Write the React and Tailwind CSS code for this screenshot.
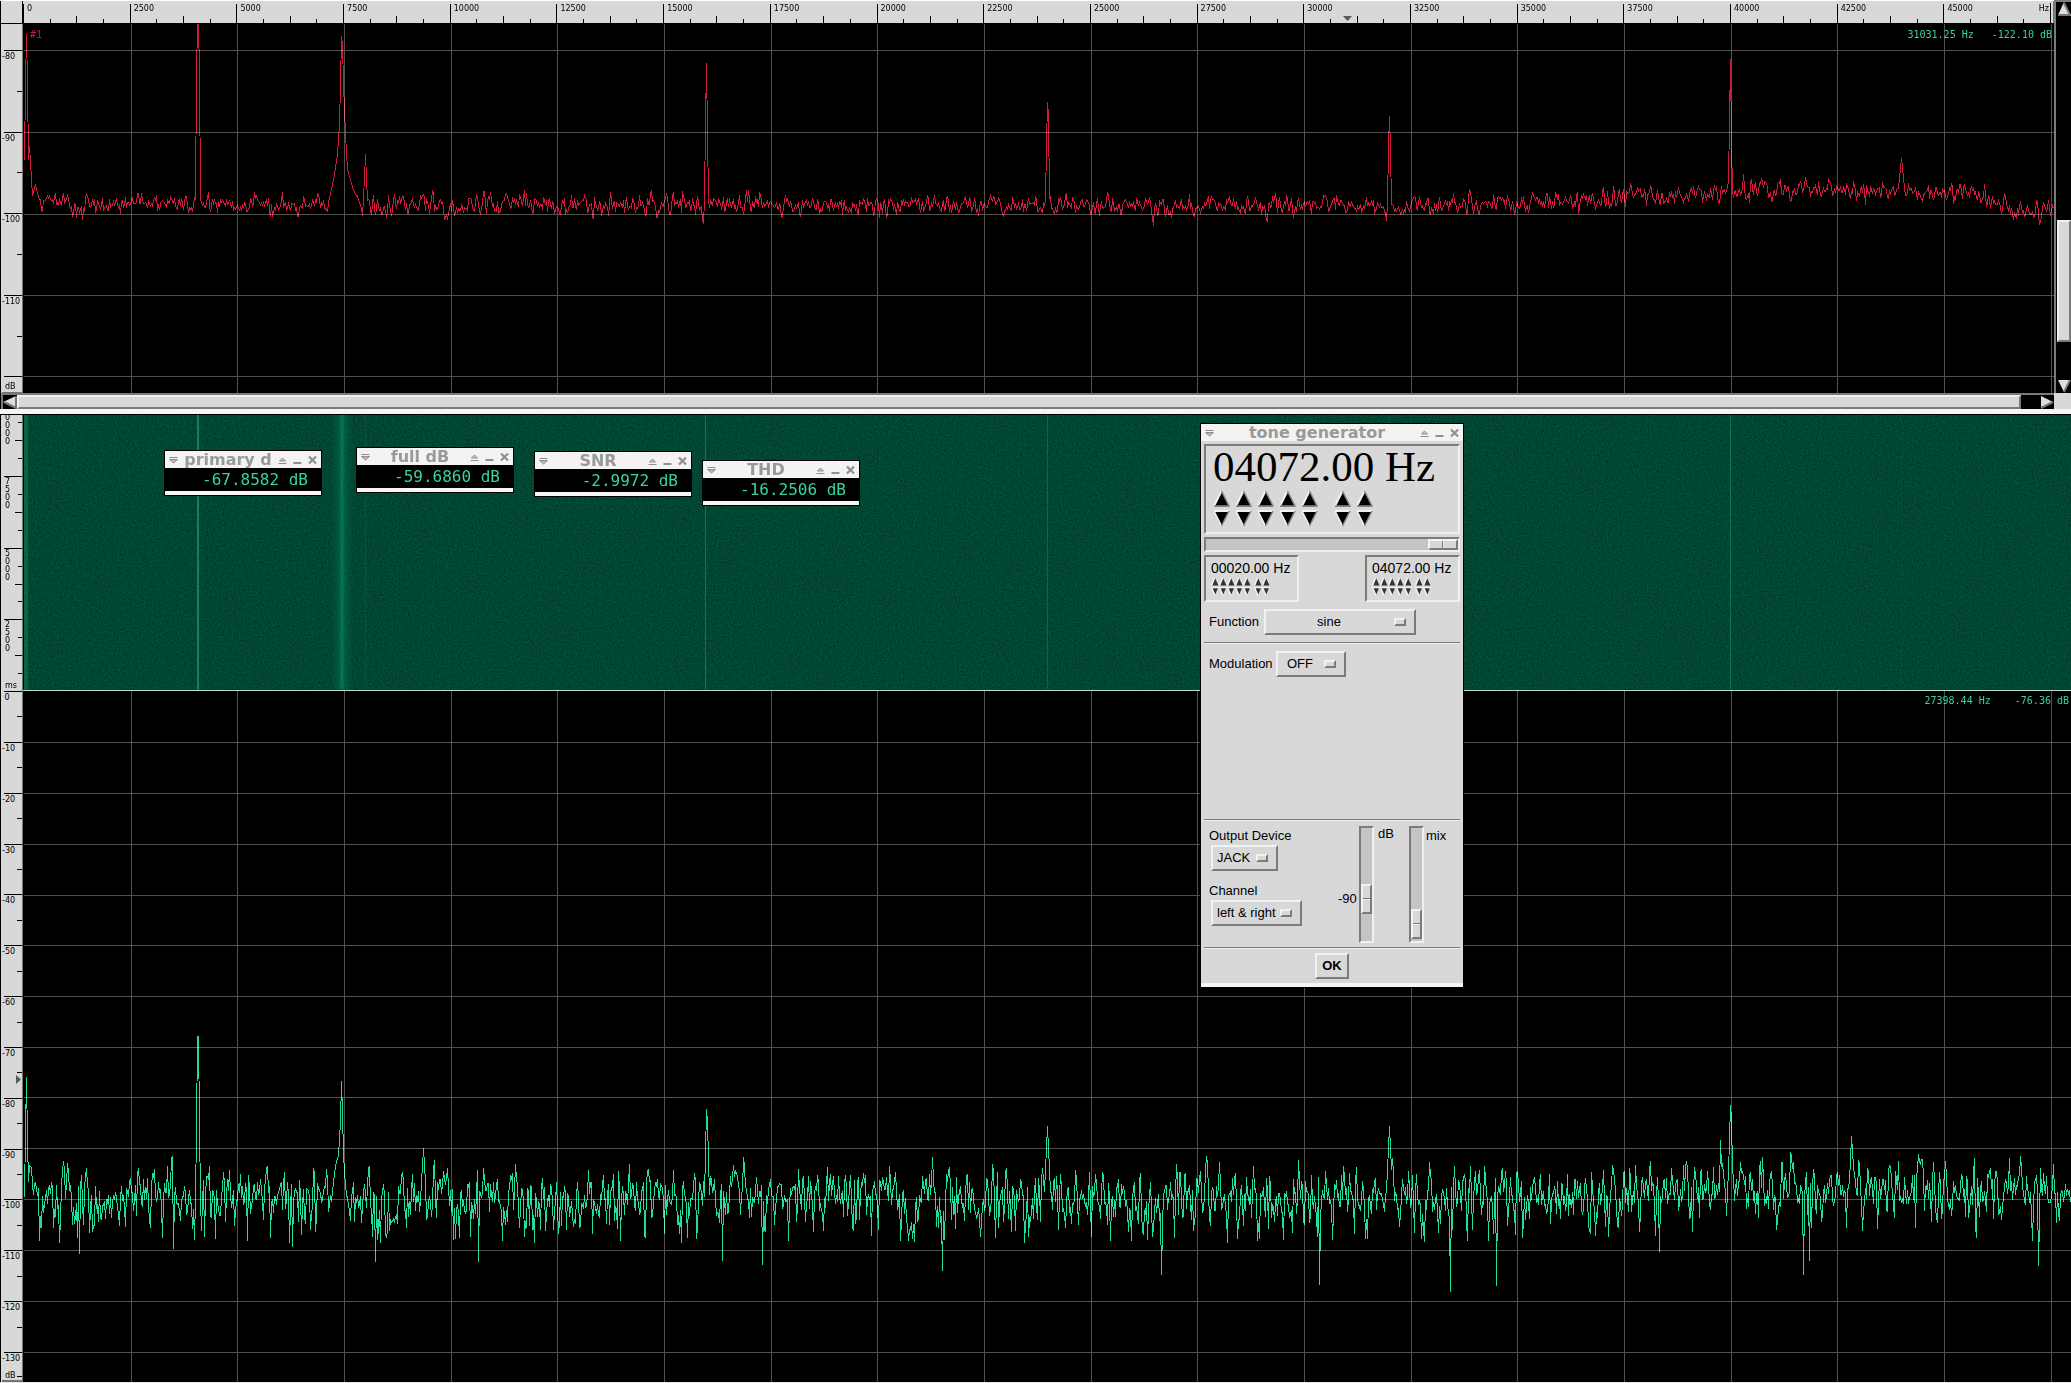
import React from "react";

/* ---------- signal model ---------- */

const HZ_SPAN = 2026.7 / 47500;
const hzX = (hz) => 1 + hz * HZ_SPAN;

function makeRandom(seed) {
  let s = seed;
  return () => {
    s = (s + 0x6d2b79f5) | 0;
    let t = Math.imul(s ^ (s >>> 15), 1 | s);
    t = (t + Math.imul(t ^ (t >>> 7), 61 | t)) ^ t;
    return ((t ^ (t >>> 14)) >>> 0) / 4294967296;
  };
}

// Averaged periodogram of windowed white noise, in dB around zero.
function noiseDb(count, frames, seed) {
  const rnd = makeRandom(seed);
  const gauss = () => Math.sqrt(-2 * Math.log(rnd() + 1e-9)) * Math.cos(2 * Math.PI * rnd());
  const power = new Array(count).fill(0);
  for (let f = 0; f < frames; f++) {
    const re = Array.from({ length: count + 2 }, gauss);
    const im = Array.from({ length: count + 2 }, gauss);
    for (let i = 0; i < count; i++) {
      const a = 0.4 * re[i] - re[i + 1] + 0.4 * re[i + 2];
      const b = 0.4 * im[i] - im[i + 1] + 0.4 * im[i + 2];
      power[i] += (a * a + b * b) / 2.64 / frames;
    }
  }
  return power.map((p) => 10 * Math.log10(p));
}

function interpolate(points, x) {
  if (x < points[0][0] || x > points[points.length - 1][0]) return null;
  for (let i = 1; i < points.length; i++) {
    const [x0, y0] = points[i - 1];
    const [x1, y1] = points[i];
    if (x <= x1) return y0 + ((y1 - y0) * (x - x0)) / (x1 - x0);
  }
  return null;
}

function buildTrace({ width, frames, seed, scale, floor, base, peaks, dips }) {
  const noise = noiseDb(width, frames, seed);
  const out = [];
  for (let x = 1; x < width; x++) {
    const mean = interpolate(base, x);
    let y = Math.min(mean - noise[x] * scale, mean + floor - (x % 7));
    for (const peak of peaks) {
      const p = interpolate(peak, x);
      if (p !== null) y = Math.min(y, p);
    }
    if (dips && dips[x]) y = dips[x];
    out.push(`${x},${Math.round(y)}`);
  }
  return out.join(" ");
}

const UPPER_TRACE = buildTrace({
  width: 2031,
  frames: 30,
  seed: 11,
  scale: 6.8,
  floor: 24,
  base: [[0, 179], [600, 180], [1000, 181], [1400, 181], [1520, 177], [1620, 171], [1720, 166], [1880, 166], [1950, 167], [1985, 184], [2031, 188]],
  peaks: [
    [[1, 136], [2, 60], [3, 10], [4, 60], [5, 136], [6, 122], [7, 138], [9, 172], [12, 160], [15, 176]],
    [[172, 176], [173, 50], [174, 0], [175, 0], [176, 48], [177, 176]],
    [[305, 178], [310, 156], [314, 130], [316, 100], [317, 60], [318, 12], [319, 20], [320, 60], [322, 110], [324, 145], [330, 166], [336, 178]],
    [[340, 176], [342, 130], [344, 178]],
    [[681, 176], [682, 100], [683, 39], [684, 110], [685, 176]],
    [[1022, 176], [1023, 120], [1024, 78], [1025, 90], [1026, 180]],
    [[1364, 180], [1365, 122], [1366, 92], [1367, 125], [1368, 180]],
    [[1705, 168], [1706, 98], [1707, 35], [1708, 119], [1709, 168]],
    [[1875, 164], [1878, 134], [1881, 164]],
  ],
});

const LOWER_TRACE = buildTrace({
  width: 2048,
  frames: 3,
  seed: 29,
  scale: 6.6,
  floor: 50,
  base: [[0, 502], [1450, 502], [1600, 497], [1700, 493], [1880, 494], [1990, 498], [2048, 502]],
  peaks: [
    [[1, 506], [2, 440], [3, 386], [4, 450], [5, 490], [6, 474], [8, 476], [10, 510]],
    [[172, 512], [173, 440], [174, 345], [175, 345], [176, 430], [177, 510]],
    [[309, 500], [312, 474], [315, 464], [317, 430], [318, 390], [319, 422], [320, 462], [322, 500]],
    [[681, 505], [683, 418], [684, 430], [686, 505]],
    [[1021, 500], [1024, 435], [1027, 500]],
    [[1363, 500], [1366, 435], [1369, 500]],
    [[1696, 500], [1697, 449], [1699, 500]],
    [[1705, 490], [1706, 449], [1707, 414], [1708, 427], [1710, 530]],
    [[1826, 490], [1828, 445], [1831, 490]],
    [[398, 490], [400, 457], [402, 490]],
  ],
  dips: { 56: 563, 150: 558, 269: 556, 352: 571, 455: 571, 699: 570, 739: 574, 919: 580, 1138: 584, 1296: 594, 1427: 601, 1473: 595, 1636: 561, 1780: 584, 1786: 570, 2015: 575 },
});

/* ---------- axes ---------- */

const FREQUENCIES = Array.from({ length: 19 }, (_, i) => i * 2500);
const GRID_X = Array.from({ length: 19 }, (_, i) => Math.floor(1.35 + (i + 1) * 106.67));

const TINY = "font-['DejaVu_Sans'] text-[8px] leading-[8px] text-black";

function FrequencyRuler() {
  return (
    <div className="relative flex h-[22px] flex-1 border-r border-neutral-500 bg-[#d8d8d8] pt-px">
      {FREQUENCIES.map((hz, i) => (
        <div key={hz} className="grid flex-1">
          <div className="grid grid-cols-4 items-end [grid-area:1/1]">
            <span className="h-[19px] border-l border-black" />
            <span className="h-[4px] border-l border-black" />
            <span className="h-[7px] border-l border-black" />
            <span className="h-[4px] border-l border-black" />
          </div>
          <div className={`${TINY} flex justify-between pt-[3px] pl-[4px] pr-px [grid-area:1/1]`}>
            <span>{hz}</span>
            {i === 18 && <span>Hz</span>}
          </div>
        </div>
      ))}
      <span className="mt-px w-[3px] border-l border-black" />
      <svg className="absolute top-[15px] left-[65%] h-[5px] w-[9px]" viewBox="0 0 9 5" aria-hidden="true">
        <path d="M0 0h9L4.500 5z" fill="#5a5a5a" />
      </svg>
    </div>
  );
}

function LevelSegment({ label }) {
  return (
    <div className="grid flex-1">
      <div className="grid grid-rows-2 justify-items-end [grid-area:1/1]">
        <span className="w-[18px] border-t border-black" />
        <span className="w-[5px] border-t border-black" />
      </div>
      <span className={`${TINY} pt-[3px] [grid-area:1/1]`}>{label}</span>
    </div>
  );
}

const RULER = "relative flex w-[23px] shrink-0 flex-col border-r border-l border-l-black border-r-neutral-500 bg-[#d8d8d8] pl-px";

function UpperLevelRuler() {
  return (
    <div className={RULER}>
      <span className="h-[26px]" />
      {["-80", "-90", "-100", "-110"].map((l) => (
        <LevelSegment key={l} label={l} />
      ))}
      <div className="grid h-[17px] border-b border-neutral-500">
        <span className="w-[18px] justify-self-end border-t border-black [grid-area:1/1]" />
        <span className={`${TINY} self-end pb-px pl-[3px] [grid-area:1/1]`}>dB</span>
      </div>
    </div>
  );
}

function TimeRuler() {
  return (
    <div className={`${RULER} justify-end overflow-hidden`}>
      {["10000", "7500", "5000", "2500"].map((l) => (
        <div key={l} className="grid h-[26%] shrink-0">
          <div className="grid grid-rows-4 justify-items-end [grid-area:1/1]">
            <span className="w-[18px] border-t border-black" />
            <span className="w-[4px] border-t border-black" />
            <span className="w-[7px] border-t border-black" />
            <span className="w-[4px] border-t border-black" />
          </div>
          <div className={`${TINY} flex flex-col pt-[2px] pl-[3px] [grid-area:1/1]`}>
            {l.split("").map((d, i) => (
              <span key={i}>{d}</span>
            ))}
          </div>
          {l === "2500" && <span className={`${TINY} self-end pb-px pl-[3px] [grid-area:1/1]`}>ms</span>}
        </div>
      ))}
    </div>
  );
}

function LowerLevelRuler() {
  return (
    <div className={RULER}>
      {Array.from({ length: 13 }, (_, i) => (i === 0 ? "\u00a00" : String(-10 * i))).map((l) => (
        <LevelSegment key={l} label={l} />
      ))}
      <div className="flex h-[30px] flex-col justify-between border-b-2 border-neutral-500">
        <div className="flex flex-col items-end">
          <span className="w-[18px] border-t border-black" />
          <span className={`${TINY} self-start pt-[2px]`}>-130</span>
        </div>
        <div className="flex items-center justify-between">
          <span className={`${TINY} pl-[3px]`}>dB</span>
          <span className="mt-[2px] w-[5px] border-t border-black" />
        </div>
      </div>
      <svg className="absolute top-[55.5%] right-px h-[9px] w-[5px]" viewBox="0 0 5 9" aria-hidden="true">
        <path d="M0 0v9L5 4.500z" fill="#5a5a5a" />
      </svg>
    </div>
  );
}

function Plot({ width, height, rows, trace, color, label }) {
  return (
    <svg
      className="h-full w-full bg-black"
      viewBox={`0 0 ${width} ${height}`}
      preserveAspectRatio="none"
      shapeRendering="crispEdges"
      role="img"
      aria-label={label}
    >
      <polyline points={trace} transform="translate(.5 .5)" fill="none" stroke={color} strokeWidth="1" vectorEffect="non-scaling-stroke" />
      <g fill="#505050" className="mix-blend-screen">
        {GRID_X.map((x) => (
          <rect key={x} x={x} y="0" width="1" height={height} />
        ))}
        {rows.map((y) => (
          <rect key={y} x="1" y={y} width={width} height="1" />
        ))}
      </g>
    </svg>
  );
}

const READOUT = "font-['DejaVu_Sans_Mono',monospace] text-[10px] leading-[12px] whitespace-pre";

/* ---------- waterfall ---------- */

function Waterfall() {
  const line = (hz, w, color, opacity) => (
    <rect x={Math.floor(hzX(hz))} y="0" width={w} height="275" fill={color} opacity={opacity} />
  );
  return (
    <svg className="h-full w-full bg-[#024e36]" viewBox="0 0 2048 275" preserveAspectRatio="none" role="img" aria-label="Waterfall">
      <defs>
        <filter id="grain" x="0" y="0" width="100%" height="100%">
          <feTurbulence type="fractalNoise" baseFrequency="0.55" numOctaves="2" seed="4" />
          <feColorMatrix values="0 0 0 0 0  0 0 0 0 0.02  0 0 0 0 0.02  2.200 0 0 0 -0.850" />
        </filter>
        <linearGradient id="glow">
          <stop offset="0" stopColor="#04764f" stopOpacity="0" />
          <stop offset=".35" stopColor="#04764f" stopOpacity=".35" />
          <stop offset=".5" stopColor="#06805a" stopOpacity=".9" />
          <stop offset=".65" stopColor="#04764f" stopOpacity=".35" />
          <stop offset="1" stopColor="#04764f" stopOpacity="0" />
        </linearGradient>
      </defs>
      <rect x="1" width="2047" height="275" filter="url(#grain)" opacity=".7" />
      <rect x="0" y="0" width="1" height="275" fill="#000" />
      <rect x="1" y="0" width="4" height="275" fill="#0a7350" opacity=".7" />
      {line(4072, 2, "#138259", 1)}
      <rect x="308" y="0" width="22" height="275" fill="url(#glow)" />
      {line(8000, 1, "#118a60", 0.2)}
      {line(15980, 1, "#118a60", 0.75)}
      {line(23990, 1, "#118a60", 0.5)}
      {line(32000, 1, "#118a60", 0.25)}
      {line(39990, 1, "#118a60", 0.65)}
      {line(44000, 1, "#118a60", 0.1)}
    </svg>
  );
}

/* ---------- scroll bars ---------- */

function ScrollArrow({ label, d, shade }) {
  return (
    <button type="button" aria-label={label} className="block h-[14px] w-[14px] shrink-0">
      <svg viewBox="0 0 14 14" className="h-full w-full">
        <path d={d} fill="#dedede" />
        <path d={shade} fill="none" stroke="#777" strokeWidth="2" />
      </svg>
    </button>
  );
}

const RAISED = "border-2 border-t-[#f2f2f2] border-l-[#f2f2f2] border-r-[#7b7b7b] border-b-[#7b7b7b] bg-[#d8d8d8]";
const SUNKEN = "border-2 border-t-[#7b7b7b] border-l-[#7b7b7b] border-r-[#f0f0f0] border-b-[#f0f0f0]";

/* ---------- windows ---------- */

function WindowIcon({ name }) {
  return (
    <svg viewBox="0 0 11 10" className="h-[10px] w-[11px]" fill="none" stroke="#8f8f8f" aria-hidden="true">
      {name === "menu" && (
        <>
          <path d="M1.500 2.500h8" />
          <path d="M1.500 4.500h8L5.500 8z" fill="#b8b8b8" />
        </>
      )}
      {name === "shade" && (
        <>
          <path d="M1.500 8.500h8" />
          <path d="M2.500 6h6L5.500 3z" fill="#c8c8c8" />
        </>
      )}
      {name === "min" && <path d="M1.500 8h8" strokeWidth="2" />}
      {name === "close" && <path d="M2 1.500l7 7M9 1.500l-7 7" strokeWidth="2.200" />}
    </svg>
  );
}

function TitleBar({ title }) {
  return (
    <div className="flex h-[17px] items-center bg-[#f4f3f2] px-[3px]">
      <button type="button" aria-label="Window menu"><WindowIcon name="menu" /></button>
      <h2 className="flex-1 text-center font-['DejaVu_Sans'] text-[16px] leading-[17px] font-bold whitespace-nowrap text-[#999]">
        {title}
      </h2>
      <div className="flex gap-[4px]">
        <button type="button" aria-label="Shade"><WindowIcon name="shade" /></button>
        <button type="button" aria-label="Minimize"><WindowIcon name="min" /></button>
        <button type="button" aria-label="Close"><WindowIcon name="close" /></button>
      </div>
    </div>
  );
}

function Meter({ title, value, place }) {
  return (
    <section className={`absolute w-[158px] border border-black bg-white ${place}`}>
      <TitleBar title={title} />
      <p className="h-[23px] bg-black pr-[13px] text-right font-['DejaVu_Sans_Mono',monospace] text-[16px] leading-[23px] text-[#38d49c]">
        {value}
      </p>
      <div className="h-[4px] bg-[#f8f6f5]" />
    </section>
  );
}

function Step({ dir, large, index }) {
  const up = dir === "up";
  return (
    <button type="button" aria-label={`Digit ${index} ${dir}`} className={large ? "h-[17px] w-[17px]" : "h-[9px] w-[8px]"}>
      {large ? (
        <svg viewBox="0 0 17 17" className="h-full w-full">
          <path d={up ? "M8.500 1L1 16.500h15z" : "M1 1h15L8.500 16z"} fill="#000" />
          <path d={up ? "M8.500 1L1 16" : "M16 1H1"} stroke="#f2f2f2" strokeWidth="2" fill="none" />
          <path d={up ? "M8.500 1L16 16H1" : "M1 1L8.500 16"} stroke={up ? "#888" : "#f2f2f2"} strokeWidth="1.500" fill="none" />
          {!up && <path d="M16 1L8.500 16" stroke="#888" strokeWidth="1.500" />}
        </svg>
      ) : (
        <svg viewBox="0 0 8 9" className="h-full w-full">
          <path d={up ? "M4 1L1 8.500h6.500z" : "M1 1h6L4 8z"} fill="#333" />
          <path d={up ? "M3.500 1L.500 8.500" : "M8 .500H.500L4 8.500"} stroke="#f2f2f2" strokeWidth="1.500" fill="none" />
        </svg>
      )}
    </button>
  );
}

function Steps({ large }) {
  return (
    <div className={large ? "flex flex-col gap-[3px]" : "flex flex-col gap-px"}>
      {["up", "down"].map((dir) => (
        <div key={dir} className={large ? "flex gap-[16px]" : "flex gap-[3px]"}>
          <div className={large ? "flex gap-[5px]" : "flex"}>
            {[1, 2, 3, 4, 5].map((i) => <Step key={i} index={i} dir={dir} large={large} />)}
          </div>
          <div className={large ? "flex gap-[5px]" : "flex"}>
            {[6, 7].map((i) => <Step key={i} index={i} dir={dir} large={large} />)}
          </div>
        </div>
      ))}
    </div>
  );
}

function FrequencyBox({ value }) {
  return (
    <div className={`h-[47px] w-[95px] ${SUNKEN} pl-[5px] pt-[3px]`}>
      <p className="text-[14px] leading-[16px]">{value}</p>
      <div className="pt-px"><Steps /></div>
    </div>
  );
}

function OptionMenu({ id, options, width, center }) {
  return (
    <div className={`relative h-[26px] ${width}`}>
      <select
        id={id}
        className={`h-full w-full appearance-none ${RAISED} ${center ? "pr-[22px] [text-align-last:center]" : "pl-[4px]"} text-[13px] leading-[16px] outline-none`}
      >
        {options.map((o) => <option key={o}>{o}</option>)}
      </select>
      <span className={`pointer-events-none absolute top-[9px] right-[10px] h-[8px] w-[12px] ${RAISED}`} />
    </div>
  );
}

function Divider() {
  return <hr className="h-[2px] border-t border-b border-t-[#7b7b7b] border-b-[#f0f0f0]" />;
}

const VERTICAL_SLIDER =
  "h-[117px] w-[15px] appearance-none border-2 border-t-[#7b7b7b] border-l-[#7b7b7b] border-r-[#f0f0f0] border-b-[#f0f0f0] bg-[#c4c4c4] [writing-mode:vertical-lr] [direction:rtl] [&::-webkit-slider-thumb]:h-[30px] [&::-webkit-slider-thumb]:w-[11px] [&::-webkit-slider-thumb]:appearance-none [&::-webkit-slider-thumb]:border-2 [&::-webkit-slider-thumb]:border-t-[#f2f2f2] [&::-webkit-slider-thumb]:border-l-[#f2f2f2] [&::-webkit-slider-thumb]:border-r-[#7b7b7b] [&::-webkit-slider-thumb]:border-b-[#7b7b7b] [&::-webkit-slider-thumb]:bg-[linear-gradient(#d8d8d8_12px,#777_12px,#777_13px,#f2f2f2_13px,#f2f2f2_14px,#d8d8d8_14px)]";

const HORIZONTAL_SLIDER =
  "block h-[15px] w-full appearance-none border-2 border-t-[#7b7b7b] border-l-[#7b7b7b] border-r-[#f0f0f0] border-b-[#f0f0f0] bg-[#c4c4c4] [&::-webkit-slider-thumb]:h-[11px] [&::-webkit-slider-thumb]:w-[30px] [&::-webkit-slider-thumb]:appearance-none [&::-webkit-slider-thumb]:border-2 [&::-webkit-slider-thumb]:border-t-[#f2f2f2] [&::-webkit-slider-thumb]:border-l-[#f2f2f2] [&::-webkit-slider-thumb]:border-r-[#7b7b7b] [&::-webkit-slider-thumb]:border-b-[#7b7b7b] [&::-webkit-slider-thumb]:bg-[linear-gradient(90deg,#d8d8d8_12px,#777_12px,#777_13px,#f2f2f2_13px,#f2f2f2_14px,#d8d8d8_14px)]";

function ToneGenerator() {
  return (
    <section className="absolute top-[423px] left-[1200px] w-[264px] border border-black bg-[#d8d8d8] font-['Liberation_Sans',sans-serif] text-[13px] leading-[16px] text-black">
      <TitleBar title="tone generator" />
      <div className="flex flex-col px-[3px] pt-[3px]">
        <div className={`h-[90px] ${SUNKEN} pl-[7px]`}>
          <p className="h-[44px] font-['Liberation_Serif',serif] text-[43px] leading-[42px] whitespace-nowrap">04072.00 Hz</p>
          <Steps large />
        </div>
        <div className="pt-[3px]">
          <input type="range" aria-label="Frequency" min="0" max="100" defaultValue="100" className={HORIZONTAL_SLIDER} />
        </div>
        <div className="flex justify-between pt-[3px]">
          <FrequencyBox value="00020.00 Hz" />
          <FrequencyBox value="04072.00 Hz" />
        </div>
        <div className="flex items-center py-[7px] pl-[5px]">
          <label htmlFor="function" className="w-[55px]">Function</label>
          <OptionMenu id="function" options={["sine", "square", "triangle"]} width="w-[152px]" center />
        </div>
        <Divider />
        <div className="flex items-center pt-[7px] pl-[5px]">
          <label htmlFor="modulation" className="w-[67px]">Modulation</label>
          <OptionMenu id="modulation" options={["OFF", "AM", "FM"]} width="w-[70px]" center />
        </div>
        <div className="h-[142px]" />
        <Divider />
        <div className="flex justify-between pt-[5px] pb-[4px] pl-[5px]">
          <div className="flex flex-col pt-[2px]">
            <label htmlFor="device">Output Device</label>
            <div className="pt-px pb-[12px] pl-[2px]">
              <OptionMenu id="device" options={["JACK", "ALSA"]} width="w-[67px]" />
            </div>
            <label htmlFor="channel">Channel</label>
            <div className="pt-px pl-[2px]">
              <OptionMenu id="channel" options={["left & right", "left", "right"]} width="w-[91px]" />
            </div>
          </div>
          <div className="flex">
            <span className="w-[21px] pt-[65px]">-90</span>
            <input id="level" type="range" min="0" max="100" defaultValue="33" className={VERTICAL_SLIDER} />
            <label htmlFor="level" className="w-[35px] pl-[4px]">dB</label>
            <input id="mix" type="range" min="0" max="100" defaultValue="2" className={VERTICAL_SLIDER} />
            <label htmlFor="mix" className="w-[36px] pt-[2px] pl-[2px]">mix</label>
          </div>
        </div>
        <Divider />
        <div className="flex justify-center py-[4px]">
          <button type="button" className={`h-[26px] w-[34px] ${RAISED} font-bold`}>OK</button>
        </div>
      </div>
      <div className="h-[4px] bg-[#f8f6f5]" />
    </section>
  );
}

/* ---------- page ---------- */

export default function App() {
  return (
    <main className="relative flex h-screen w-full flex-col overflow-hidden bg-black">
      <div className="flex min-h-0 flex-[394]">
        <div className="flex min-w-0 flex-1 flex-col">
          <div className="flex h-[24px] shrink-0 border-t border-white pb-px">
            <div className="mr-px w-[22px] border-l border-black bg-[#d8d8d8]" />
            <FrequencyRuler />
          </div>
          <div className="flex min-h-0 flex-1">
            <UpperLevelRuler />
            <div className="relative min-w-0 flex-1">
              <Plot
                width={2031}
                height={370}
                rows={[26, 108, 190, 271, 353]}
                trace={UPPER_TRACE}
                color="#d01a3e"
                label="Averaged spectrum"
              />
              <span className={`${READOUT} absolute top-[5px] left-[7px] text-[#c8193c]`}>#1</span>
              <span className={`${READOUT} absolute top-[5px] right-[2px] text-[#38d49c]`}>{"31031.25 Hz   -122.10 dB"}</span>
            </div>
          </div>
        </div>
        <div className="flex w-[17px] shrink-0 flex-col items-center border-l-2 border-t-2 border-[#7b7b7b] bg-black">
          <ScrollArrow label="Scroll up" d="M7 0L1 13h12z" shade="M7 1l6 12H1" />
          <div className="flex-[205]" />
          <div className={`w-[14px] flex-[119] ${RAISED}`} />
          <div className="flex-[38]" />
          <ScrollArrow label="Scroll down" d="M1 1h12L7 13z" shade="M13 1L7 13" />
        </div>
      </div>

      <div className="flex h-[21px] shrink-0 flex-col">
        <div className="flex h-[16px] pl-px">
          <div className="flex flex-1 items-center border-t-2 border-l-2 border-[#7b7b7b] bg-black">
            <ScrollArrow label="Scroll left" d="M0 7L13 1v12z" shade="M13 1v12L1 7" />
            <div className={`h-[14px] flex-[2004] ${RAISED}`} />
            <div className="flex-[19]" />
            <ScrollArrow label="Scroll right" d="M1 1v12L13 7z" shade="M1 13L13 7" />
          </div>
          <div className="w-[17px] bg-[#d8d8d8]" />
        </div>
        <div className="flex-1 bg-[#f6f5f4]" />
      </div>

      <div className="flex min-h-0 flex-[276] border-t border-black">
        <TimeRuler />
        <div className="min-w-0 flex-1 border-b border-[#b9dccb]">
          <Waterfall />
        </div>
      </div>

      <div className="flex min-h-0 flex-[692] border-b border-[#e8e8e8]">
        <LowerLevelRuler />
        <div className="relative min-w-0 flex-1">
          <Plot
            width={2048}
            height={691}
            rows={[51, 102, 153, 204, 254, 305, 356, 406, 457, 508, 559, 610, 661]}
            trace={LOWER_TRACE}
            color="#22dca0"
            label="Live spectrum"
          />
          <span className={`${READOUT} absolute top-[4px] right-[2px] text-[#38d49c]`}>{"27398.44 Hz    -76.36 dB"}</span>
        </div>
      </div>

      <Meter title="primary d" value="-67.8582 dB" place="top-[450px] left-[164px]" />
      <Meter title="full dB" value="-59.6860 dB" place="top-[447px] left-[356px]" />
      <Meter title="SNR" value="-2.9972 dB" place="top-[451px] left-[534px]" />
      <Meter title="THD" value="-16.2506 dB" place="top-[460px] left-[702px]" />
      <ToneGenerator />
    </main>
  );
}
